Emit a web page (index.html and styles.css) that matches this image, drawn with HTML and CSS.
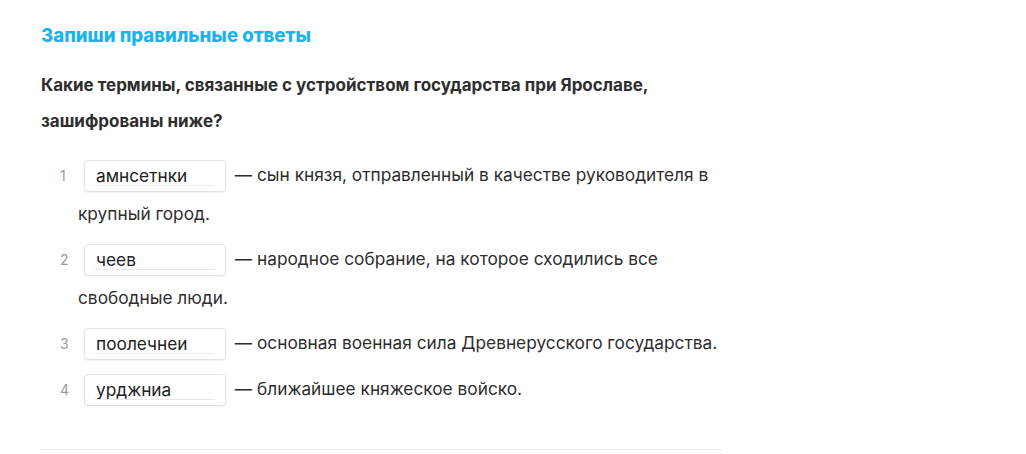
FILE: index.html
```html
<!DOCTYPE html>
<html lang="ru">
<head>
    <meta charset="UTF-8">
    <meta name="viewport" content="width=device-width, initial-scale=1.0">
    <title>Запиши правильные ответы</title>
    <link rel="stylesheet" href="styles.css">
</head>
<body>
    <div class="task">
        <h1>Запиши правильные ответы</h1>

        <p class="question">Какие термины, связанные с устройством государства при Ярославе, зашифрованы ниже?</p>

        <ol class="answers">
            <li><span class="num">1</span><span class="field">амнсетнки</span> — сын князя, отправленный в качестве руководителя в крупный город.</li>
            <li><span class="num">2</span><span class="field">чеев</span> — народное собрание, на которое сходились все свободные люди.</li>
            <li><span class="num">3</span><span class="field">поолечнеи</span> — основная военная сила Древнерусского государства.</li>
            <li><span class="num">4</span><span class="field">урджниа</span> — ближайшее княжеское войско.</li>
        </ol>

        <div class="divider"></div>
    </div>
</body>
</html>
```

FILE: styles.css
```css
body {
    margin: 0;
    background: #fff;
    font-family: Inter, "Noto Sans", sans-serif;
    color: #2e2e2e;
}
.task {
    width: 682px;
    padding: 22px 0 0 41px;
}
h1 {
    margin: 0;
    font-size: 18.6px;
    font-weight: 800;
    line-height: 26px;
    color: #1cb4e8;
}
.question {
    margin: 19px 0 0;
    font-size: 17px;
    font-weight: 700;
    line-height: 36px;
}
.answers {
    list-style: none;
    margin: 17px 0 0;
    padding: 0;
}
.answers li {
    padding-left: 37px;
    text-indent: -18px;
    font-size: 17.3px;
    line-height: 38px;
    margin-bottom: 7px;
}
.num {
    display: inline-block;
    width: 24px;
    text-indent: 0;
    color: #9a9a9a;
    font-size: 14px;
}
.field {
    display: inline-block;
    position: relative;
    box-sizing: border-box;
    width: 142px;
    height: 32px;
    padding: 0 10px 0 11px;
    margin-right: 4px;
    vertical-align: middle;
    text-indent: 0;
    line-height: 30px;
    border: 1px solid #e2e2e2;
    border-radius: 4px;
    box-shadow: 0 1px 2px rgba(0,0,0,0.06);
    color: #222;
}
.field::after {
    content: "";
    position: absolute;
    left: 10px;
    right: 10px;
    bottom: 5px;
    border-bottom: 1px solid #e8e8e8;
}
.divider {
    margin-top: 40px;
    border-top: 1px solid #e8e8e8;
}
```
